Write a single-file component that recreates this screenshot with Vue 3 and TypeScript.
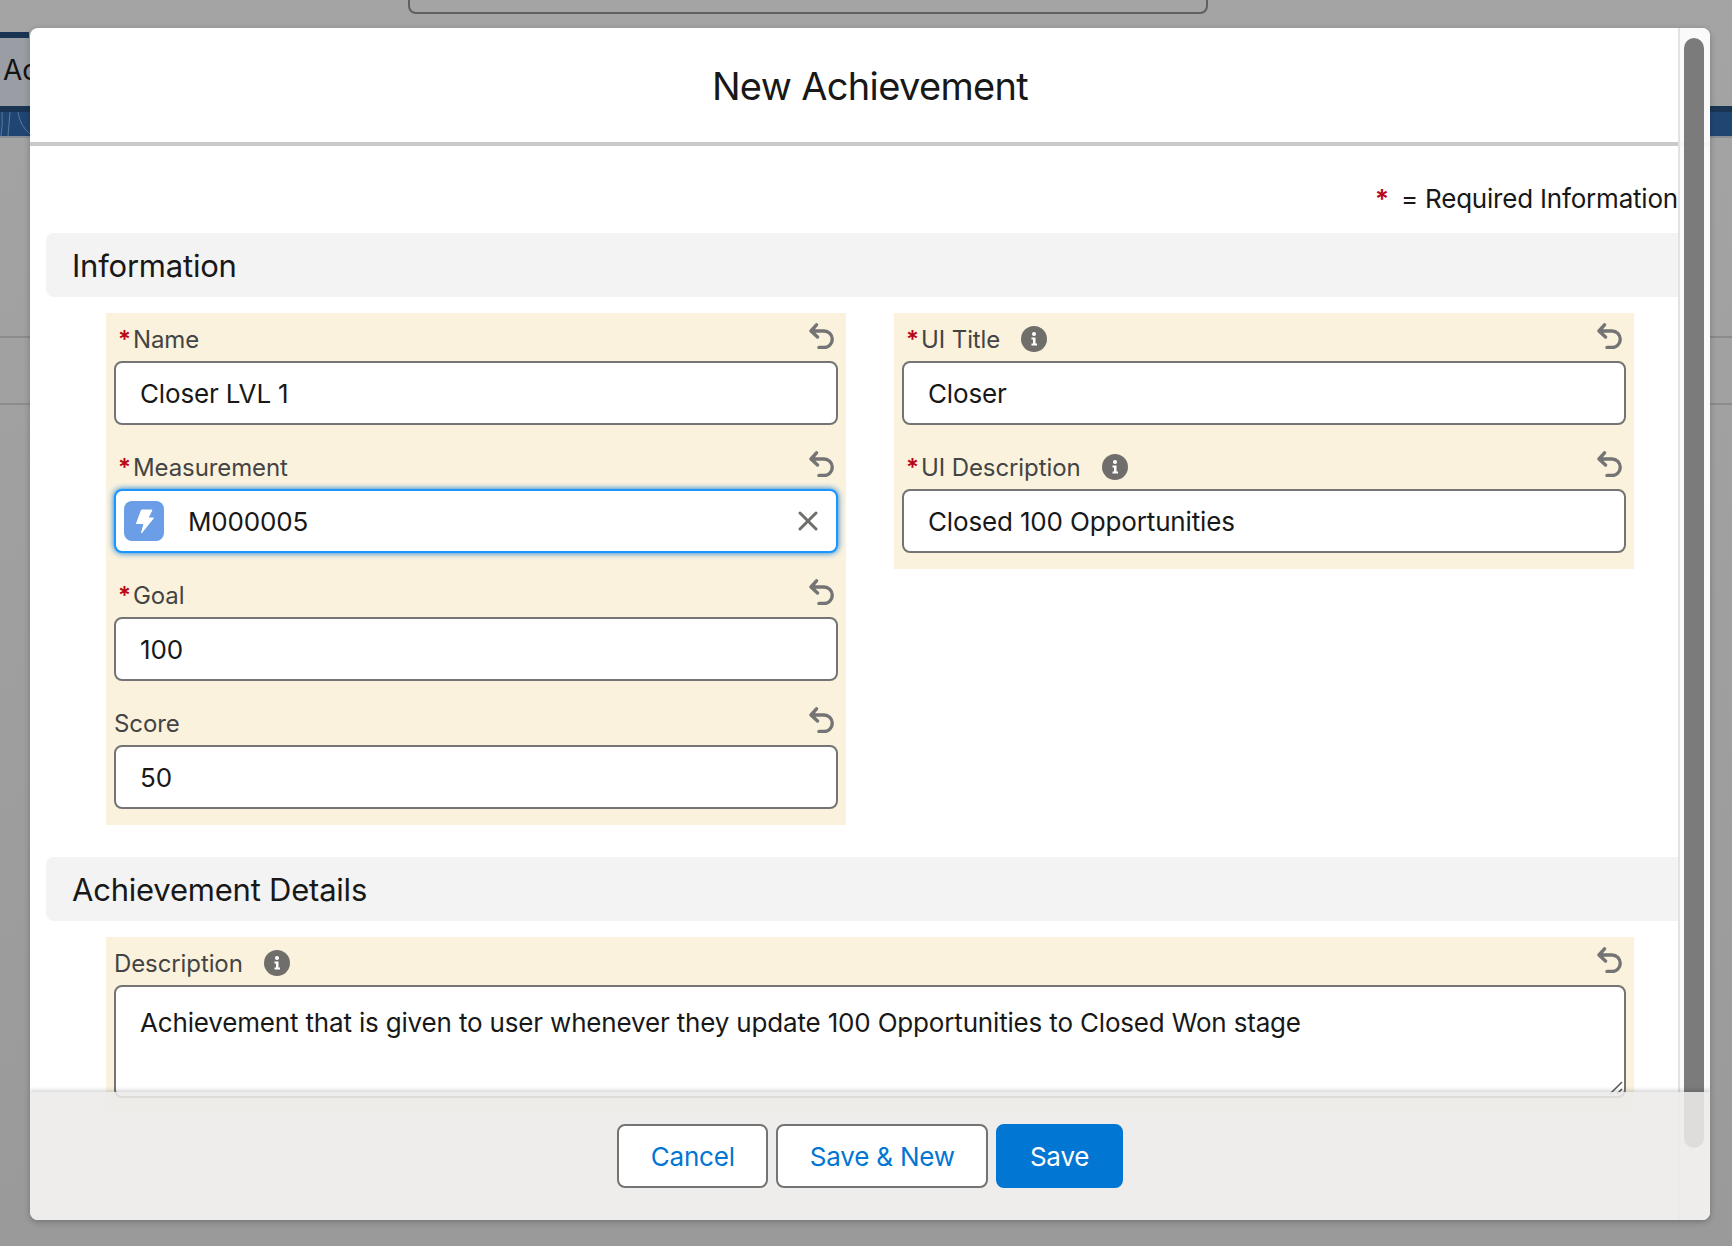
<script setup lang="ts">
interface Field {
  label: string;
  value: string;
  required?: boolean;
  help?: boolean;
  lookup?: boolean;
}

const leftFields: Field[] = [
  { label: "Name", value: "Closer LVL 1", required: true },
  { label: "Measurement", value: "M000005", required: true, lookup: true },
  { label: "Goal", value: "100", required: true },
  { label: "Score", value: "50" },
];

const rightFields: Field[] = [
  { label: "UI Title", value: "Closer", required: true, help: true },
  { label: "UI Description", value: "Closed 100 Opportunities", required: true, help: true },
];

const columns = [leftFields, rightFields];
</script>

<template>
  <div class="page">
    <div class="backdrop">
      <div class="search-stub"></div>
      <div class="tab-row"><div class="tab">Ac</div></div>
      <div class="band">
        <svg class="waves" width="30" height="24" viewBox="0 0 30 24" fill="none" stroke="#5c7a99" stroke-width="1">
          <path d="M2 0 Q3 12 1 24M10 0 Q9 12 8 24M18 0 Q20 14 30 22" />
        </svg>
      </div>
      <div class="rule first"></div>
      <div class="rule second"></div>
    </div>

    <div class="modal">
      <header class="modal-head">
        <h2>New Achievement</h2>
      </header>

      <div class="modal-body">
        <div class="required-note"><span class="star">*</span><span>= Required Information</span></div>

        <h3 class="section">Information</h3>
        <div class="columns">
          <div v-for="(col, i) in columns" :key="i" class="panel">
            <div v-for="f in col" :key="f.label" class="field">
              <div class="label-row">
                <span v-if="f.required" class="req">*</span>
                <span class="label">{{ f.label }}</span>
                <svg v-if="f.help" class="info" width="26" height="26" viewBox="0 0 26 26">
                  <circle cx="13" cy="13" r="13" fill="#706e6b" />
                  <circle cx="13" cy="8" r="2" fill="#fff" />
                  <path d="M10.5 11.5H14.5V17.5H16V19.5H10.5V17.5H12V13.5H10.5Z" fill="#fff" />
                </svg>
                <svg class="undo" width="26" height="26" viewBox="0 0 26 26" fill="none" stroke="#747474" stroke-width="3.4" stroke-linecap="round" stroke-linejoin="round">
                  <path d="M7.5 1.8L2 8L8.5 14M2 8H15A8.2 8.2 0 0 1 15 24.5H10" />
                </svg>
              </div>
              <div v-if="f.lookup" class="input focused">
                <span class="lookup-icon">
                  <svg width="40" height="40" viewBox="0 0 40 40">
                    <path d="M17.5 9H28L24 17H29.5L17.5 32L20 22.5H12.5Z" fill="#fff" stroke="#fff" stroke-width="1" stroke-linejoin="round" />
                  </svg>
                </span>
                <span class="lookup-value">{{ f.value }}</span>
                <svg class="clear" width="20" height="20" viewBox="0 0 20 20" stroke="#706e6b" stroke-width="3" stroke-linecap="round">
                  <path d="M2 2L18 18M18 2L2 18" />
                </svg>
              </div>
              <div v-else class="input">{{ f.value }}</div>
            </div>
          </div>
        </div>

        <h3 class="section">Achievement Details</h3>
        <div class="panel wide">
          <div class="field">
            <div class="label-row">
              <span class="label">Description</span>
              <svg class="info" width="26" height="26" viewBox="0 0 26 26">
                <circle cx="13" cy="13" r="13" fill="#706e6b" />
                <circle cx="13" cy="8" r="2" fill="#fff" />
                <path d="M10.5 11.5H14.5V17.5H16V19.5H10.5V17.5H12V13.5H10.5Z" fill="#fff" />
              </svg>
              <svg class="undo" width="26" height="26" viewBox="0 0 26 26" fill="none" stroke="#747474" stroke-width="3.4" stroke-linecap="round" stroke-linejoin="round">
                <path d="M7.5 1.8L2 8L8.5 14M2 8H15A8.2 8.2 0 0 1 15 24.5H10" />
              </svg>
            </div>
            <div class="input textarea">
              Achievement that is given to user whenever they update 100 Opportunities to Closed Won stage
              <svg class="grip" width="14" height="14" viewBox="0 0 14 14" stroke="#555" stroke-width="1.5">
                <path d="M1 13L13 1M8 13L13 8" />
              </svg>
            </div>
          </div>
        </div>
      </div>

      <div class="track"><div class="thumb"></div></div>

      <footer class="modal-foot">
        <button class="btn">Cancel</button>
        <button class="btn">Save &amp; New</button>
        <button class="btn brand">Save</button>
      </footer>
    </div>
  </div>
</template>

<style>
html,
body {
  margin: 0;
  background: #9f9f9f;
}
</style>

<style scoped>
.page {
  position: relative;
  width: 1732px;
  height: 1246px;
  overflow: hidden;
  font-family: Inter, "Liberation Sans", sans-serif;
  background: linear-gradient(180deg, #a4a4a4 0%, #9a9a9a 100%);
}

/* dimmed page behind the dialog */
.backdrop {
  display: flex;
  flex-direction: column;
}
.search-stub {
  width: 796px;
  height: 12px;
  margin-left: 408px;
  border: 2px solid #5f5f5f;
  border-top: 0;
  border-radius: 0 0 8px 8px;
}
.tab-row {
  height: 74px;
  margin-top: 18px;
}
.tab {
  width: 26px;
  height: 68px;
  padding-left: 3px;
  border-top: 6px solid #1a3553;
  background: #9a9da3;
  color: #141414;
  font-size: 28px;
  line-height: 64px;
}
.band {
  height: 24px;
  border-top: 6px solid #1a3553;
  border-bottom: 2px solid #8a8f96;
  background: #1f4672;
}
.waves {
  display: block;
}
.rule {
  height: 2px;
  background: #8c8c8c;
}
.rule.first {
  margin-top: 198px;
}
.rule.second {
  margin-top: 65px;
}

.modal {
  position: absolute;
  left: 30px;
  top: 28px;
  width: 1680px;
  height: 1192px;
  overflow: hidden;
  border-radius: 8px;
  background: #fff;
  box-shadow: 0 2px 6px rgba(0, 0, 0, 0.25);
}
.modal-head {
  height: 114px;
  border-bottom: 4px solid #c9c9c9;
  display: flex;
  align-items: center;
  justify-content: center;
}
.modal-head h2 {
  margin: 0;
  padding-top: 1px;
  font-size: 38px;
  font-weight: 400;
  color: #181818;
  letter-spacing: -0.65px;
}

.modal-body {
  padding: 0 16px;
}
.required-note {
  display: flex;
  justify-content: flex-end;
  align-items: center;
  gap: 12px;
  box-sizing: border-box;
  height: 87px;
  padding-top: 18px;
  margin-right: 16px;
  font-size: 26px;
  letter-spacing: -0.2px;
  color: #181818;
}
.star {
  color: #ba0517;
  font-size: 26px;
  font-weight: 600;
}
.section {
  margin: 0;
  height: 64px;
  padding-left: 26px;
  border-radius: 8px;
  background: #f3f3f3;
  font-size: 31px;
  font-weight: 400;
  letter-spacing: -0.22px;
  line-height: 66px;
  color: #181818;
}
.columns {
  display: flex;
  align-items: flex-start;
  gap: 48px;
  margin: 16px 60px 32px;
}
.panel {
  flex: 1;
  padding: 0 8px 16px;
  background: #fbf2de;
}
.panel.wide {
  margin: 16px 60px 0;
}
.label-row {
  display: flex;
  align-items: center;
  height: 48px;
  box-sizing: border-box;
  padding-top: 4px;
  font-size: 24px;
  letter-spacing: -0.1px;
  color: #444;
}
.req {
  margin: 0 3px 0 4px;
  color: #ba0517;
  font-weight: 600;
  width: 12px;
}
.info {
  margin-left: 21px;
  margin-top: -1px;
}
.undo {
  margin-left: auto;
  margin-right: 3px;
  align-self: flex-start;
  margin-top: 6px;
}
.field + .field {
  margin-top: 16px;
}
.input {
  display: flex;
  align-items: center;
  height: 64px;
  padding: 0 24px;
  box-sizing: border-box;
  border: 2px solid #747474;
  border-radius: 8px;
  background: #fff;
  font-size: 26px;
  letter-spacing: -0.15px;
  color: #181818;
}
.input.focused {
  padding: 0 18px 0 8px;
  border-color: #1b96ff;
  box-shadow: 0 0 6px #0176d3;
}
.lookup-icon {
  display: block;
  width: 40px;
  height: 40px;
  border-radius: 8px;
  background: #6b9ee6;
}
.lookup-icon svg {
  display: block;
}
.lookup-value {
  margin-left: 24px;
}
.clear {
  margin-left: auto;
}
.textarea {
  position: relative;
  align-items: flex-start;
  height: 113px;
  padding-top: 20px;
  letter-spacing: -0.17px;
  line-height: 32px;
}
.grip {
  position: absolute;
  right: 1px;
  bottom: 1px;
}

.track {
  position: absolute;
  top: 0;
  right: 0;
  width: 30px;
  height: 100%;
  border-left: 2px solid #e2e2e2;
  background: rgba(250, 250, 250, 0.93);
}
.thumb {
  position: absolute;
  top: 10px;
  left: 4px;
  width: 20px;
  height: 1110px;
  border-radius: 10px;
  background: #7b7b7b;
}

.modal-foot {
  position: absolute;
  left: 0;
  right: 0;
  bottom: 0;
  height: 128px;
  display: flex;
  align-items: center;
  justify-content: center;
  gap: 8px;
  background: rgba(236, 235, 233, 0.88);
  box-shadow: 0 -2px 4px rgba(0, 0, 0, 0.16);
}
.btn {
  height: 64px;
  padding: 0 31.5px;
  border: 2px solid #747474;
  border-radius: 8px;
  background: #fff;
  color: #0176d3;
  font-family: inherit;
  font-size: 26px;
  letter-spacing: -0.2px;
}
.btn.brand {
  border-color: #0176d3;
  background: #0176d3;
  color: #fff;
}
</style>
